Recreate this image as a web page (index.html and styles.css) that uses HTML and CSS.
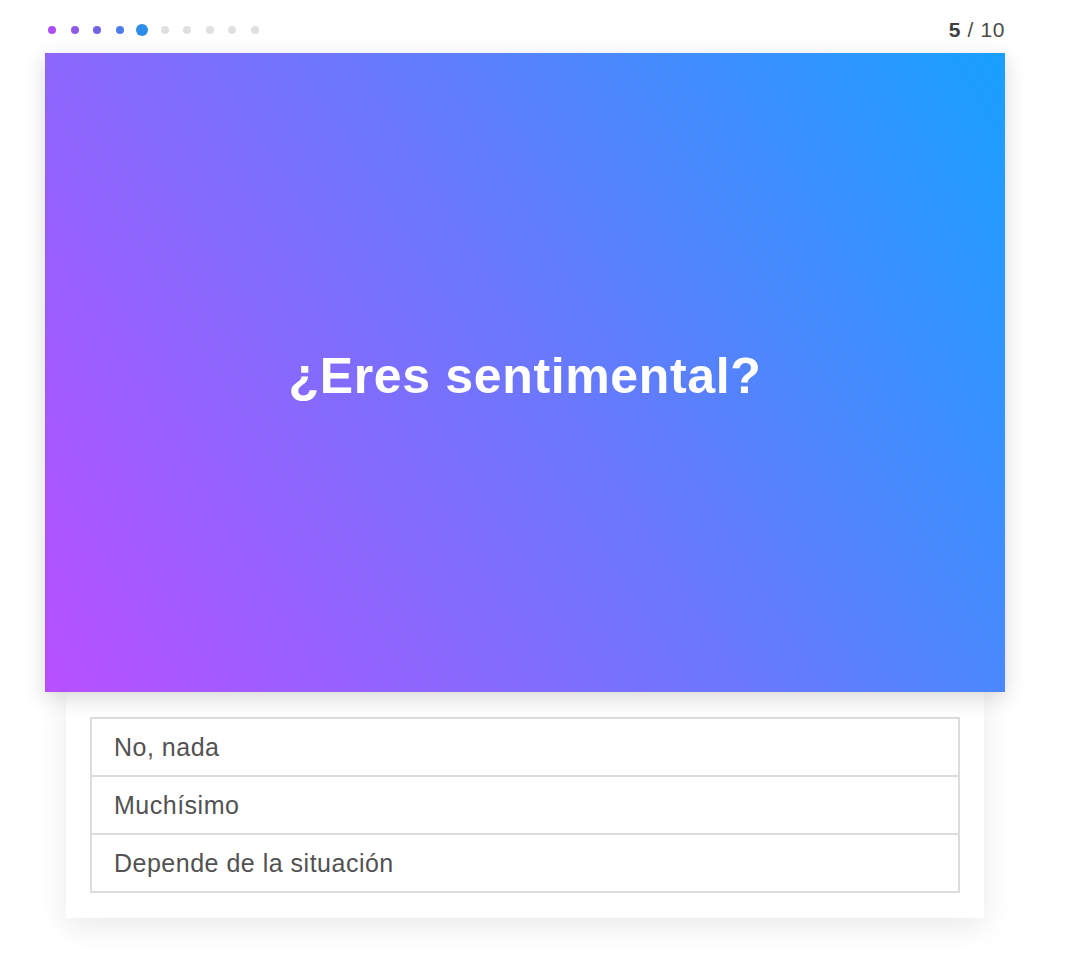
FILE: index.html
```html
<!DOCTYPE html>
<html lang="es">
<head>
  <meta charset="UTF-8">
  <title>¿Eres sentimental?</title>
  <link rel="stylesheet" href="styles.css">
</head>
<body>
  <div class="quiz">
    <div class="quiz-header">
      <div class="dots">
        <span class="dot done d1"></span>
        <span class="dot done d2"></span>
        <span class="dot done d3"></span>
        <span class="dot done d4"></span>
        <span class="dot current"></span>
        <span class="dot"></span>
        <span class="dot"></span>
        <span class="dot"></span>
        <span class="dot"></span>
        <span class="dot"></span>
      </div>
      <div class="counter"><b>5</b> / 10</div>
    </div>

    <div class="question">
      <h1>¿Eres sentimental?</h1>
    </div>

    <div class="answers">
      <ul class="options">
        <li>No, nada</li>
        <li>Muchísimo</li>
        <li>Depende de la situación</li>
      </ul>
    </div>
  </div>
</body>
</html>
```

FILE: styles.css
```css
body {
  margin: 0;
  padding-bottom: 40px;
  background: #fff;
  font-family: "Liberation Sans", Arial, sans-serif;
}
.quiz {
  width: 960px;
  margin-left: 45px;
}
.quiz-header {
  display: flex;
  align-items: center;
  justify-content: space-between;
  height: 24px;
  padding-top: 18px;
  margin-bottom: 11px;
}
.dots {
  display: flex;
  align-items: center;
  gap: 14.5px;
  padding-left: 3px;
}
.dot {
  width: 8px;
  height: 8px;
  border-radius: 50%;
  background: #e0e0e0;
}
.d1 { background: #ad4ef2; }
.d2 { background: #8e5aec; }
.d3 { background: #7064e6; }
.d4 { background: #4d7de9; }
.dot.current {
  background: #2a8de9;
  transform: scale(1.5);
}
.counter {
  font-size: 21px;
  letter-spacing: 0.6px;
  color: #4a4a4a;
}
.counter b {
  color: #3f3f3f;
}
.question {
  position: relative;
  z-index: 1;
  height: 639px;
  display: flex;
  align-items: center;
  justify-content: center;
  background: linear-gradient(58deg, #b84fff 0%, #6a78fd 52%, #18a0ff 100%);
  box-shadow: 0 6px 20px rgba(0, 0, 0, 0.16);
}
.question h1 {
  margin: 6px 0 0;
  color: #fff;
  font-size: 50px;
  letter-spacing: 0.65px;
  font-weight: bold;
}
.answers {
  width: 870px;
  margin: 0 auto;
  padding: 25px 24px 25px;
  background: #fff;
  box-shadow: 0 8px 28px rgba(0, 0, 0, 0.09);
}
.options {
  list-style: none;
  margin: 0;
  padding: 0;
  border: 2px solid #dcdcdc;
}
.options li {
  height: 56px;
  line-height: 56px;
  padding-left: 22px;
  font-size: 25px;
  letter-spacing: 0.5px;
  color: #525252;
}
.options li + li {
  border-top: 2px solid #dcdcdc;
}
```
